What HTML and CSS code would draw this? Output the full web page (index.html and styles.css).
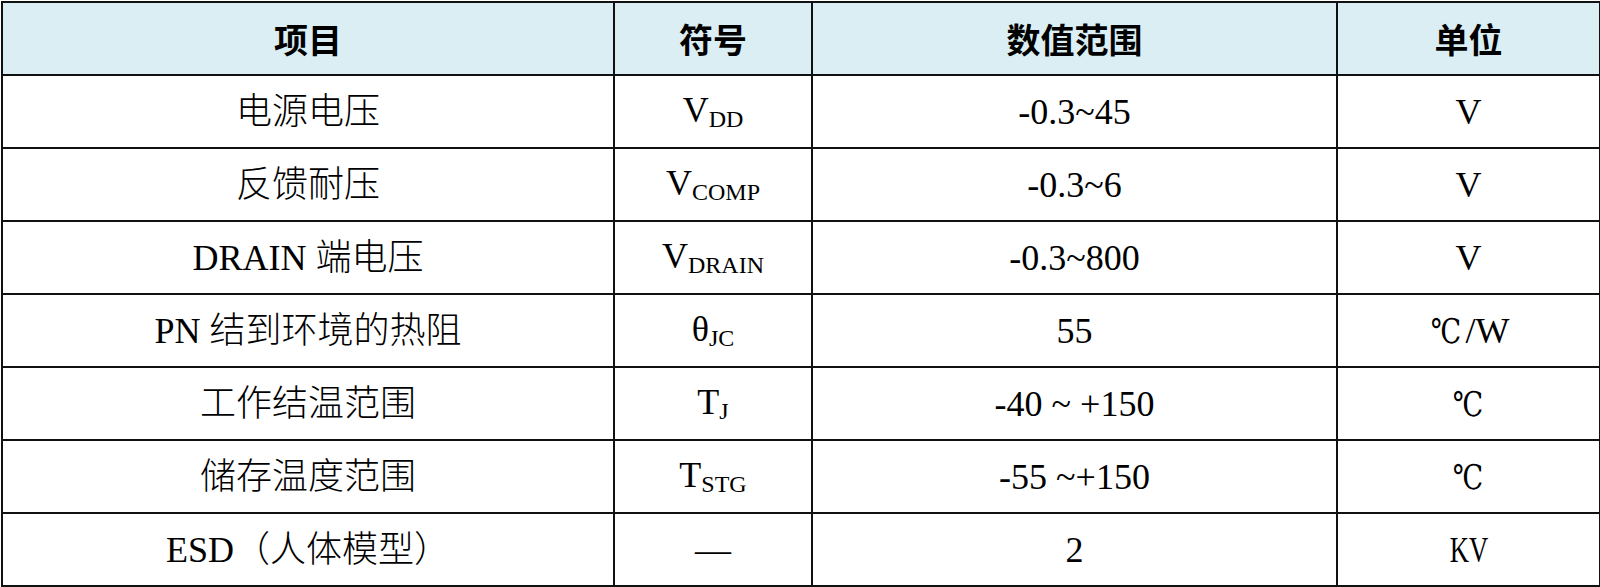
FILE: index.html
```html
<!DOCTYPE html>
<html lang="zh-CN">
<head>
<meta charset="utf-8">
<title>极限参数</title>
<link rel="stylesheet" href="styles.css">
</head>
<body>
<table class="spec">
  <colgroup>
    <col class="c1"><col class="c2"><col class="c3"><col class="c4">
  </colgroup>
  <thead>
    <tr class="head">
      <th>项目</th><th>符号</th><th>数值范围</th><th>单位</th>
    </tr>
  </thead>
  <tbody>
    <tr><td>电源电压</td><td>V<sub class="sb">DD</sub></td><td>-0.3~45</td><td>V</td></tr>
    <tr><td>反馈耐压</td><td>V<sub class="sb">COMP</sub></td><td>-0.3~6</td><td>V</td></tr>
    <tr><td>DRAIN 端电压</td><td>V<sub class="sb">DRAIN</sub></td><td>-0.3~800</td><td>V</td></tr>
    <tr><td>PN 结到环境的热阻</td><td>θ<sub class="sb">JC</sub></td><td>55</td><td class="unit"><span class="deg">℃</span>/W</td></tr>
    <tr><td>工作结温范围</td><td>T<sub class="sb">J</sub></td><td>-40 ~ +150</td><td class="unit"><span class="deg">℃</span></td></tr>
    <tr><td>储存温度范围</td><td>T<sub class="sb">STG</sub></td><td>-55 ~+150</td><td class="unit"><span class="deg">℃</span></td></tr>
    <tr><td>ESD（人体模型）</td><td>—</td><td>2</td><td class="unit"><span class="narrow">KV</span></td></tr>
  </tbody>
</table>
</body>
</html>
```

FILE: styles.css
```css
html, body {
  margin: 0;
  padding: 0;
  background: #ffffff;
}

.spec {
  margin: 1px 0 0 1px;
  width: 1598px;
  border-collapse: collapse;
  table-layout: fixed;
  font-family: "Liberation Serif", "Noto Sans CJK SC", serif;
  font-size: 36px;
  color: #000;
}

.c1 { width: 612px; }
.c2 { width: 198px; }
.c3 { width: 525px; }
.c4 { width: 263px; }

.spec th,
.spec td {
  border: 2.5px solid #111;
  padding: 0;
  text-align: center;
  vertical-align: middle;
  line-height: 1;
  white-space: nowrap;
}

.spec tr {
  height: 73px;
}

.head th {
  background: #daeef3;
  font-family: "Noto Sans CJK SC", sans-serif;
  font-weight: 700;
  font-size: 34px;
}

.spec td {
  font-weight: 300;
}

.sb {
  font-size: 24px;
  line-height: 1;
  vertical-align: -5px;
}

.deg {
  font-family: "DejaVu Serif", "Liberation Serif", serif;
  font-size: 34px;
  display: inline-block;
  transform: scaleX(0.8);
}

.narrow {
  display: inline-block;
  transform: scaleX(0.74);
}
```
